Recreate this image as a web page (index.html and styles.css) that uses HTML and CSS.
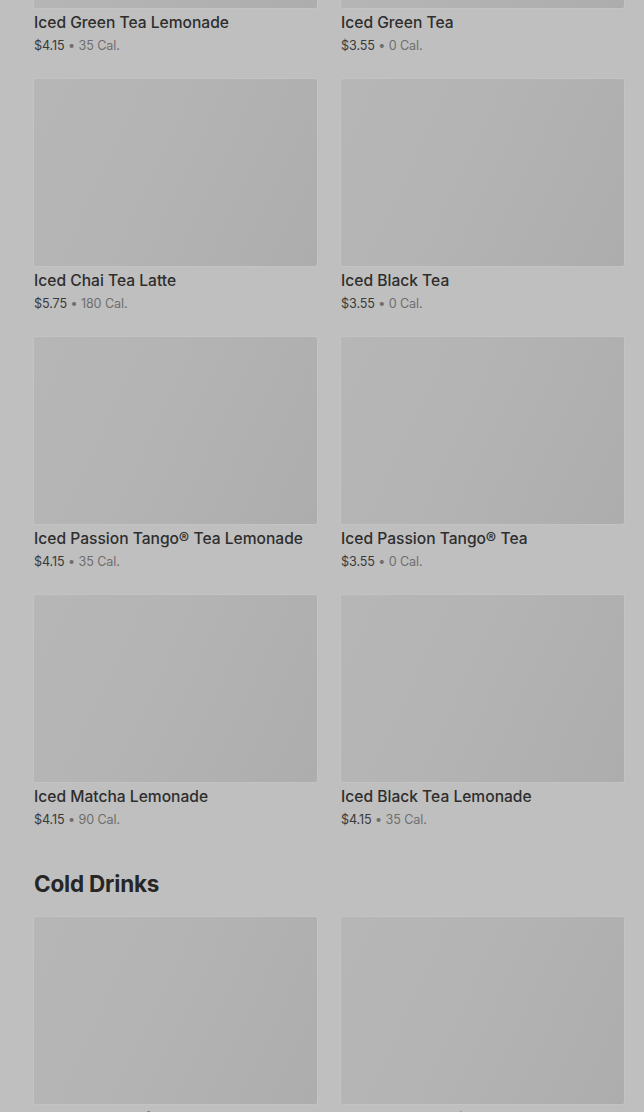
FILE: index.html
```html
<!doctype html>
<html lang="en">
  <head>
    <meta charset="UTF-8" />
    <meta name="viewport" content="width=device-width, initial-scale=1.0" />
    <title>Menu</title>
    <link rel="stylesheet" href="styles.css">
  </head>
  <body>
    <div class="menu">
      <section class="section">
        <div class="grid">
          <div class="item">
            <div class="photo"></div>
            <div class="name">Iced Green Tea Lemonade</div>
            <div class="meta"><span class="price">$4.15</span> • 35 Cal.</div>
          </div>
          <div class="item">
            <div class="photo"></div>
            <div class="name">Iced Green Tea</div>
            <div class="meta"><span class="price">$3.55</span> • 0 Cal.</div>
          </div>
          <div class="item">
            <div class="photo"></div>
            <div class="name">Iced Chai Tea Latte</div>
            <div class="meta"><span class="price">$5.75</span> • 180 Cal.</div>
          </div>
          <div class="item">
            <div class="photo"></div>
            <div class="name">Iced Black Tea</div>
            <div class="meta"><span class="price">$3.55</span> • 0 Cal.</div>
          </div>
          <div class="item">
            <div class="photo"></div>
            <div class="name">Iced Passion Tango® Tea Lemonade</div>
            <div class="meta"><span class="price">$4.15</span> • 35 Cal.</div>
          </div>
          <div class="item">
            <div class="photo"></div>
            <div class="name">Iced Passion Tango® Tea</div>
            <div class="meta"><span class="price">$3.55</span> • 0 Cal.</div>
          </div>
          <div class="item">
            <div class="photo"></div>
            <div class="name">Iced Matcha Lemonade</div>
            <div class="meta"><span class="price">$4.15</span> • 90 Cal.</div>
          </div>
          <div class="item">
            <div class="photo"></div>
            <div class="name">Iced Black Tea Lemonade</div>
            <div class="meta"><span class="price">$4.15</span> • 35 Cal.</div>
          </div>
        </div>
      </section>

      <section class="section">
        <h2 class="section-title">Cold Drinks</h2>
        <div class="grid">
          <div class="item">
            <div class="photo"></div>
            <div class="name">Mango Dragonfruit Lemonade</div>
            <div class="meta"><span class="price">$5.45</span> • 90 Cal.</div>
          </div>
          <div class="item">
            <div class="photo"></div>
            <div class="name">Strawberry Açaí Lemonade</div>
            <div class="meta"><span class="price">$5.45</span> • 110 Cal.</div>
          </div>
        </div>
      </section>
    </div>
  </body>
</html>
```

FILE: styles.css
```css
html,
body {
  height: 100%;
  overflow: hidden;
}
body {
  margin: 0;
  background-color: #bfbfbf;
  font-family: Inter, "Open Sans", Arial, sans-serif;
  color: #2b2b2b;
}
.menu {
  margin-top: -179px;
  padding: 0 20px 0 34px;
}
.grid {
  display: grid;
  grid-template-columns: 283px 283px;
  column-gap: 24px;
  row-gap: 24px;
}
.photo {
  height: 187px;
  border-radius: 2px;
  background: linear-gradient(115deg, #b6b6b6 0%, #b4b4b4 40%, #adadad 100%);
  box-shadow: 0 0 0 1px #c3c3c3;
}
.name {
  margin-top: 5px;
  font-size: 15.6px;
  line-height: 20px;
  font-weight: 500;
  color: #2e2e2e;
}
.meta {
  margin-top: 4px;
  font-size: 12.6px;
  line-height: 18px;
  letter-spacing: -0.1px;
  color: #6e6e6e;
}
.price {
  color: #3a3a3a;
}
.section-title {
  margin: 39px 0 17px;
  font-size: 22.5px;
  line-height: 32px;
  font-weight: 700;
  letter-spacing: -0.2px;
  color: #262626;
}
```
